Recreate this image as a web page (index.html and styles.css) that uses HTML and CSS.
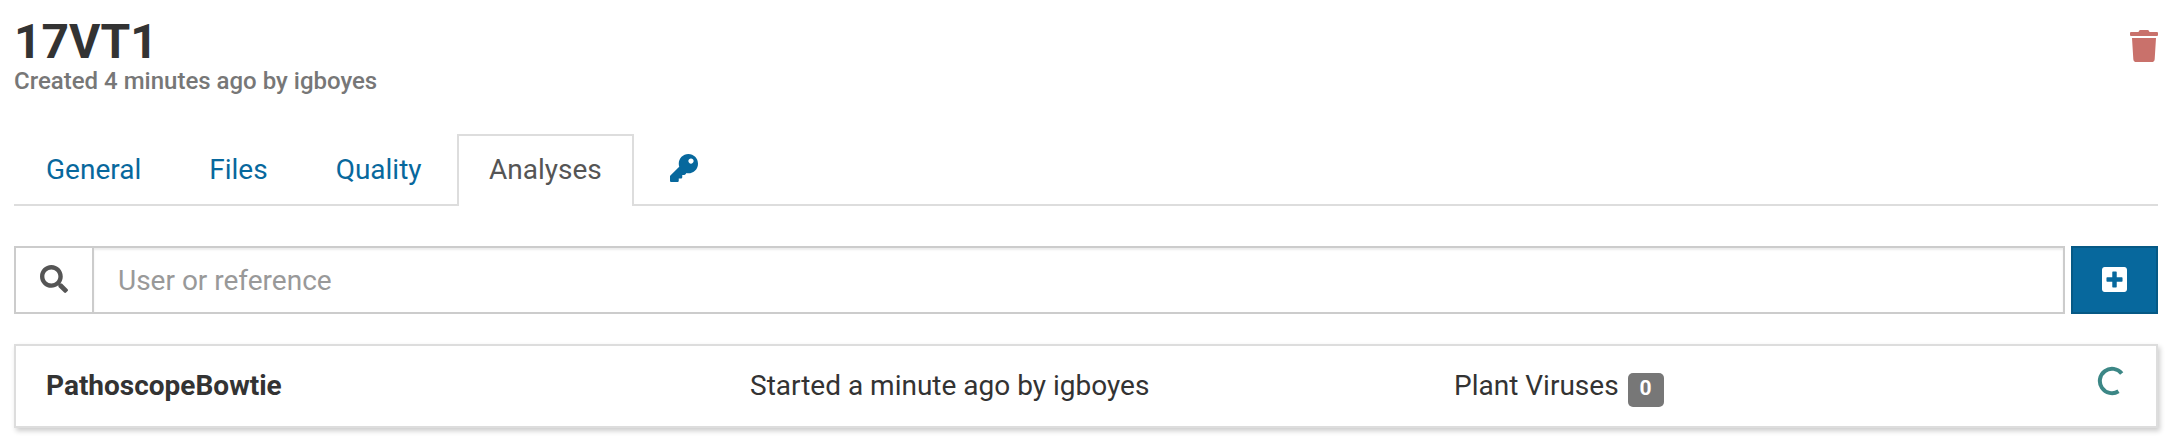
FILE: index.html
```html
<!DOCTYPE html>
<html lang="en">
<head>
<meta charset="utf-8">
<title>17VT1</title>
<link rel="stylesheet" href="styles.css">
</head>
<body>
<header class="header">
  <div>
    <h1 class="title">17VT1</h1>
    <p class="subtitle">Created 4 minutes ago by igboyes</p>
  </div>
  <svg class="trash" viewBox="0 0 448 512"><path d="M432 32H312l-9.400-18.700A24 24 0 0 0 281.100 0H166.800a23.720 23.720 0 0 0-21.400 13.300L136 32H16A16 16 0 0 0 0 48v32a16 16 0 0 0 16 16h416a16 16 0 0 0 16-16V48a16 16 0 0 0-16-16zM32 128l21.200 339a48 48 0 0 0 47.900 45h245.800a48 48 0 0 0 47.900-45L416 128z"/></svg>
</header>
<nav class="tabs">
  <a class="tab">General</a>
  <a class="tab">Files</a>
  <a class="tab">Quality</a>
  <a class="tab active">Analyses</a>
  <a class="tab"><svg class="key" viewBox="0 0 512 512"><path d="M512 176.001C512 273.203 433.202 352 336 352c-11.220 0-22.190-1.062-32.827-3.069l-24.012 27.014A23.999 23.999 0 0 1 261.223 384H224v40c0 13.255-10.745 24-24 24h-40v40c0 13.255-10.745 24-24 24H24c-13.255 0-24-10.745-24-24v-78.059c0-6.365 2.529-12.470 7.029-16.971l161.802-161.802C163.108 213.814 160 195.271 160 176 160 78.798 238.797.001 335.999 0 433.488-.001 512 78.511 512 176.001zM336 128c0 26.510 21.490 48 48 48s48-21.490 48-48-21.490-48-48-48-48 21.490-48 48z"/></svg></a>
</nav>
<div class="toolbar">
  <div class="search">
    <span class="addon"><svg class="glass" viewBox="0 0 512 512"><path d="M505 442.700L405.300 343c-4.500-4.500-10.600-7-17-7H372c27.600-35.300 44-79.700 44-128C416 93.100 322.900 0 208 0S0 93.100 0 208s93.100 208 208 208c48.300 0 92.700-16.400 128-44v16.300c0 6.400 2.500 12.500 7 17l99.700 99.700c9.400 9.400 24.600 9.400 33.900 0l28.300-28.300c9.400-9.400 9.400-24.600.1-34zM208 336c-70.700 0-128-57.200-128-128 0-70.700 57.200-128 128-128 70.700 0 128 57.200 128 128 0 70.700-57.200 128-128 128z"/></svg></span>
    <input class="input" type="text" placeholder="User or reference">
  </div>
  <button class="create"><svg class="plus" viewBox="0 32 448 448"><path d="M400 32H48C21.500 32 0 53.500 0 80v352c0 26.500 21.500 48 48 48h352c26.500 0 48-21.500 48-48V80c0-26.500-21.500-48-48-48zm-32 252c0 6.600-5.400 12-12 12h-92v92c0 6.600-5.400 12-12 12h-56c-6.600 0-12-5.400-12-12v-92H92c-6.600 0-12-5.400-12-12v-56c0-6.600 5.400-12 12-12h92v-92c0-6.600 5.400-12 12-12h56c6.600 0 12 5.400 12 12v92h92c6.600 0 12 5.400 12 12v56z"/></svg></button>
</div>
<div class="item">
  <strong class="name">PathoscopeBowtie</strong>
  <span>Started a minute ago by igboyes</span>
  <span class="reference">Plant Viruses <span class="badge">0</span></span>
  <svg class="spinner" viewBox="0 0 30 30"><path d="M24.700 7.500A12.200 12.200 0 1 0 21.500 25.300"/></svg>
</div>
</body>
</html>
```
FILE: styles.css
```css
* { box-sizing: border-box; }
body {
  margin: 0;
  min-height: 448px;
  padding: 15px 16px 0 14px;
  background: #fff;
  color: #333;
  font: 28px/40px Roboto, "Liberation Sans", sans-serif;
}
svg { display: block; fill: currentColor; }
.header { display: flex; justify-content: space-between; height: 119px; }
.title { margin: 0; font-size: 48px; line-height: 53px; font-weight: 700; }
.subtitle { margin: -4px 0 0; font-size: 24px; line-height: 34px; font-weight: 500; color: #777; }
.trash { width: 28px; height: 32px; margin-top: 15px; color: #c9716b; }
.tabs { display: flex; gap: 4px; height: 72px; border-bottom: 2px solid #ddd; }
.tab {
  height: 72px;
  padding: 14px 30px;
  border: 2px solid transparent;
  border-bottom: 0;
  color: #07689d;
}
.tab.active { margin-left: -0.6px; color: #555; background: #fff; border-color: #ddd; }
.key { width: 28px; height: 28px; margin-top: 4.4px; }
.toolbar { display: flex; gap: 6px; height: 68px; margin-top: 40px; }
.search { display: flex; flex: 1; border: 2px solid #ccc; }
.addon { width: 78px; padding: 16.500px 24px; border-right: 2px solid #ccc; color: #555; }
.glass { width: 28px; height: 28px; }
.input {
  flex: 1;
  min-width: 0;
  border: 0;
  padding: 2px 24px 0;
  font: inherit;
  color: #555;
  box-shadow: inset 0 2px 2px rgba(0, 0, 0, .075);
}
.input::placeholder { color: #999; }
.create {
  display: flex;
  align-items: center;
  justify-content: center;
  width: 87px;
  padding: 0;
  background: #07689d;
  border: 2px solid #065985;
  color: #fff;
}
.plus { width: 25px; height: 25px; margin-top: -1px; }
.item {
  display: grid;
  grid-template-columns: 704px 704px 1fr 30px;
  height: 84px;
  margin-top: 30px;
  padding: 20px 30px;
  border: 2px solid #ddd;
  box-shadow: 2px 3px 5px rgba(0, 0, 0, .2);
}
.name { font-weight: 700; }
.reference { display: flex; gap: 9px; }
.badge {
  width: 36px;
  height: 34px;
  margin-top: 7px;
  border-radius: 5px;
  background: #777;
  color: #fff;
  font-size: 21px;
  line-height: 30px;
  font-weight: 700;
  text-align: center;
}
.spinner { width: 30px; height: 30px; margin-left: 1px; fill: none; stroke: #3c8786; stroke-width: 4; }
```
